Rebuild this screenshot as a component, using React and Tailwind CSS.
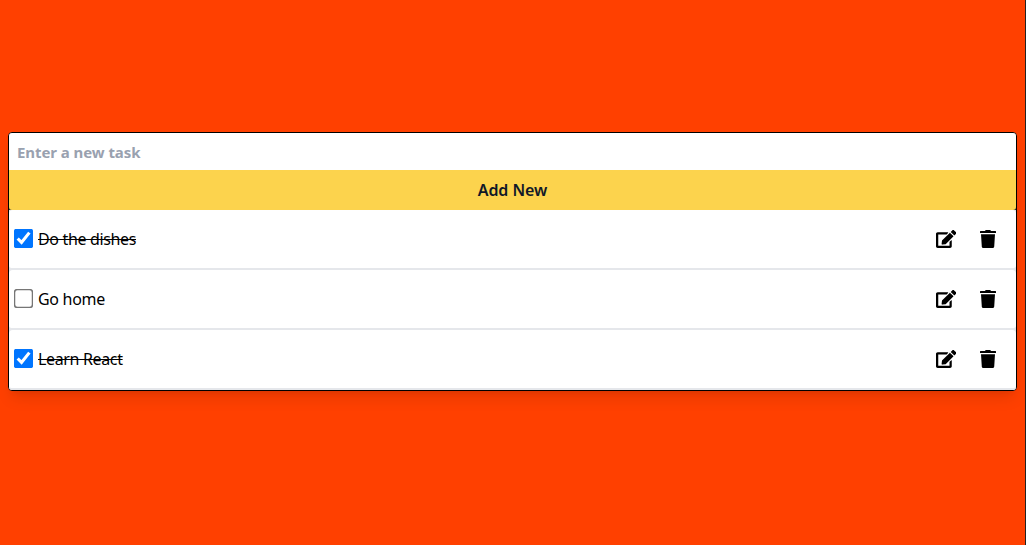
import { useState } from "react";
import { FaEdit } from "react-icons/fa";

const initialTasks = [
  { id: 1, title: "Do the dishes", done: true },
  { id: 2, title: "Go home", done: false },
  { id: 3, title: "Learn React", done: true },
];

function TrashIcon() {
  return (
    <svg viewBox="0 0 16 18" className="h-[18px] w-4" fill="currentColor" aria-hidden="true">
      <path d="M5 .9Q5.3 0 6.1 0h3.8q.8 0 1.1.9h4.5q.5 0 .5.5V3H0V1.4q0-.5.5-.5Z" />
      <path d="M1 4.3h14l-.8 12.2q-.1 1.5-1.5 1.5H3.3q-1.4 0-1.5-1.5Z" />
    </svg>
  );
}

function TaskRow({ task, onToggle, onDelete }) {
  return (
    <li className="bg-gray-200">
      <div className="flex h-[60px] items-center justify-between rounded border-b-2 border-gray-200 bg-white pl-2 pr-5">
        <label className="flex items-center gap-2">
          <input
            type="checkbox"
            checked={task.done}
            onChange={onToggle}
            className="mb-0.5 h-[13px] w-[13px] scale-150 accent-[#0075ff]"
          />
          <span className={task.done ? "tracking-[-0.35px] line-through" : "tracking-[-0.3px]"}>{task.title}</span>
        </label>
        <div className="flex items-center gap-6 text-black">
          <button aria-label="Edit"><FaEdit className="h-[18px] w-[20.25px]" /></button>
          <button aria-label="Delete" onClick={onDelete}><TrashIcon /></button>
        </div>
      </div>
    </li>
  );
}

export default function App() {
  const [tasks, setTasks] = useState(initialTasks);
  const toggle = (id) => setTasks(tasks.map((t) => (t.id === id ? { ...t, done: !t.done } : t)));
  const remove = (id) => setTasks(tasks.filter((t) => t.id !== id));

  return (
    <main className="h-screen border-r border-[#222] bg-[#ff4000] px-2 pt-[132px] font-['Noto_Sans','Open_Sans',sans-serif] text-base text-black">
      <section className="overflow-hidden rounded border border-black bg-white shadow-lg">
        <form className="bg-gray-800" onSubmit={(e) => e.preventDefault()}>
          <input
            placeholder="Enter a new task"
            className="block h-[37px] w-full bg-white px-2 pb-px pt-px text-[15px] font-bold tracking-[-0.07px] outline-none placeholder:text-gray-400"
          />
          <button className="block h-10 w-full rounded-b-[3px] bg-[#fcd34d] text-base font-semibold tracking-[-0.05px] text-gray-900">Add New</button>
        </form>
        <ul>
          {tasks.map((t) => (
            <TaskRow key={t.id} task={t} onToggle={() => toggle(t.id)} onDelete={() => remove(t.id)} />
          ))}
        </ul>
      </section>
    </main>
  );
}
